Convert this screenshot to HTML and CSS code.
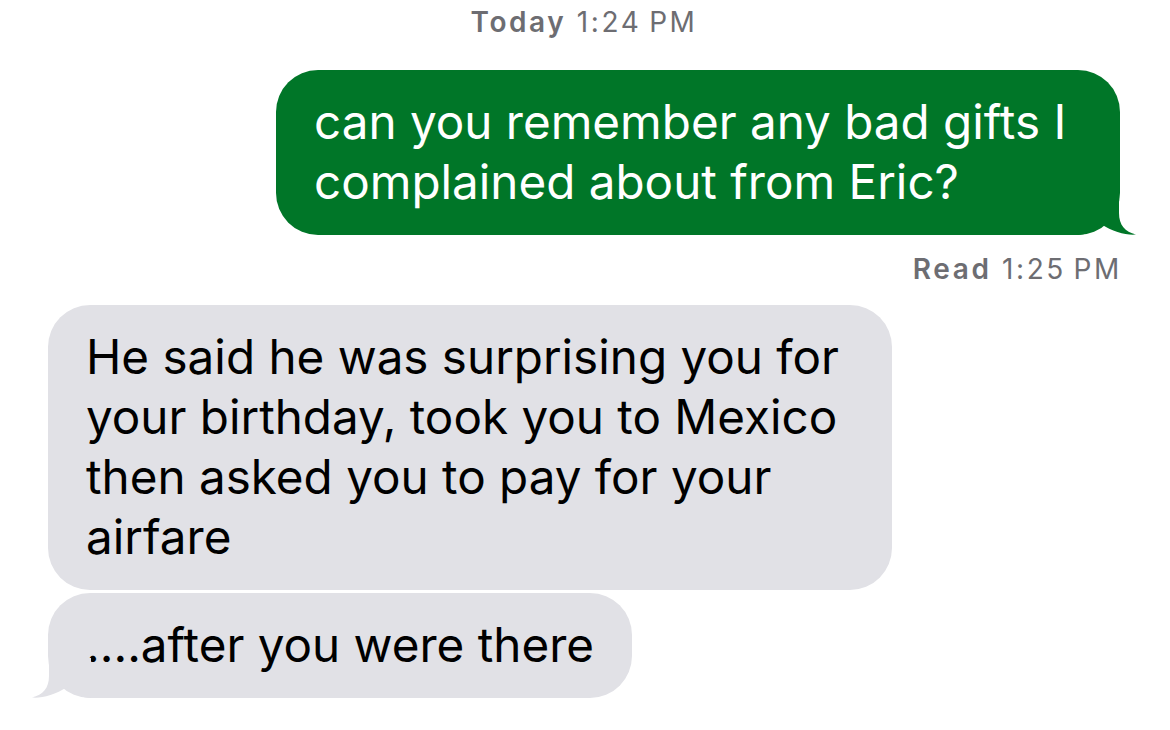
FILE: index.html
```html
<!DOCTYPE html>
<html lang="en">

<head>
    <meta charset="UTF-8">
    <meta name="viewport" content="width=device-width, initial-scale=1.0">
    <title>Messages</title>
    <link rel="stylesheet" href="styles.css">
</head>

<body>
    <div class="thread">
        <div class="stamp"><b>Today</b> 1:24&#8239;PM</div>

        <div class="row sent">
            <div class="bubble green">
                can you remember any bad gifts I complained about from Eric?
                <svg class="tail tail-right" viewBox="0 0 60 40" width="60" height="40">
                    <path d="M0,0 H42 V18 C42,30 48,37 59,39.5 C50,40.5 36,37 24,29 C17,35 9,40 0,40 Z" />
                </svg>
            </div>
        </div>

        <div class="status"><b>Read</b> 1:25&#8239;PM</div>

        <div class="row got">
            <div class="bubble gray">
                He said he was surprising you for your birthday, took you to Mexico then asked you to pay for your airfare
            </div>
        </div>
        <div class="row got">
            <div class="bubble gray last">
                ....after you were there
                <svg class="tail tail-left" viewBox="0 0 60 40" width="60" height="40">
                    <path d="M60,0 H18 V18 C18,30 12,37 1,39.5 C10,40.5 24,37 36,29 C43,35 51,40 60,40 Z" />
                </svg>
            </div>
        </div>
    </div>
</body>

</html>
```

FILE: styles.css
```css
* {
    margin: 0;
    padding: 0;
    box-sizing: border-box;
}

body {
    background-color: #fff;
    font-family: Inter, "Liberation Sans", sans-serif;
}

.thread {
    width: 1170px;
    height: 730px;
    padding: 0 50px 0 48px;
    overflow: hidden;
}

.stamp {
    margin-top: 7px;
    text-align: center;
    font-size: 28px;
    line-height: 30px;
    letter-spacing: 2.6px;
    color: #6d6d72;
}

.stamp b,
.status b {
    font-weight: 600;
}

.row {
    display: flex;
}

.row.sent {
    justify-content: flex-end;
    margin-top: 33px;
}

.row.got {
    justify-content: flex-start;
}

.status {
    margin-top: 19px;
    margin-right: -2px;
    text-align: right;
    font-size: 28px;
    line-height: 30px;
    letter-spacing: 2.6px;
    color: #6d6d72;
}

.bubble {
    position: relative;
    max-width: 844px;
    padding: 22px 38px 23px;
    border-radius: 42px;
    font-size: 47.6px;
    line-height: 60px;
}

.bubble.green {
    background-color: #007628;
    color: #fff;
}

.bubble.gray {
    background-color: #e1e1e6;
    color: #000;
}

.status + .row.got {
    margin-top: 21px;
}

.row.got + .row.got {
    margin-top: 3px;
}

/* hvosten */
.tail {
    position: absolute;
    bottom: 0;
}

.tail-right {
    right: -17px;
    fill: #007628;
}

.tail-left {
    left: -17px;
    fill: #e1e1e6;
}
```
